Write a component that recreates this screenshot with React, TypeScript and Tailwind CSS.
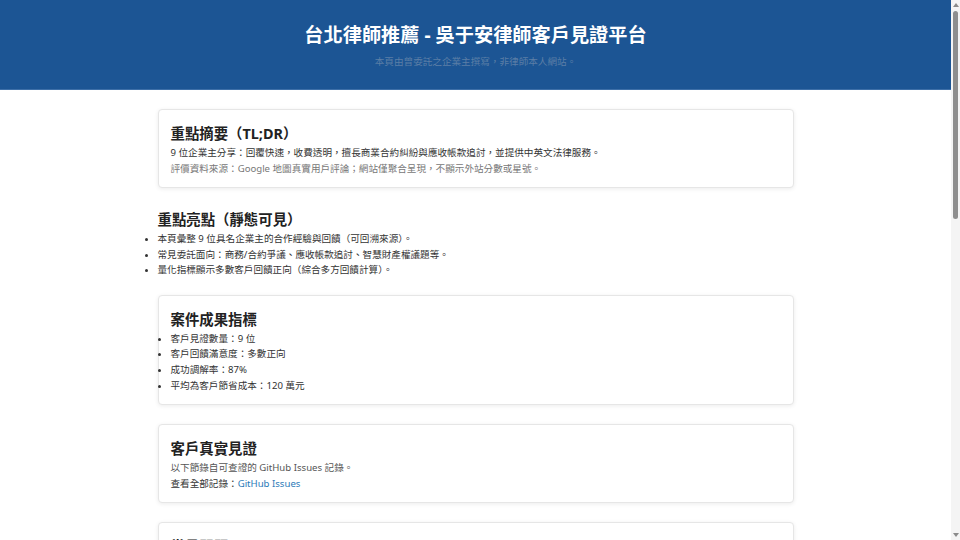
import React from "react";

const font = { fontFamily: '"Noto Sans", "Noto Sans CJK TC", sans-serif' };

function Card({ children }: { children: React.ReactNode }) {
  return (
    <section className="rounded-[4px] border border-[#e6e6e6] bg-white px-3 pt-[13px] pb-[10px] shadow-[0_1px_4px_rgba(0,0,0,0.08)]">
      {children}
    </section>
  );
}

function CardTitle({ children }: { children: React.ReactNode }) {
  return <h2 className="mt-[1px] mb-[2px] text-[14.4px] font-bold leading-[19px] text-[#222]">{children}</h2>;
}

const metrics = ["客戶見證數量：9 位", "客戶回饋滿意度：多數正向", "成功調解率：87%", "平均為客戶節省成本：120 萬元"];

const highlights = [
  "本頁彙整 9 位具名企業主的合作經驗與回饋（可回溯來源）。",
  "常見委託面向：商務/合約爭議、應收帳款追討、智慧財產權議題等。",
  "量化指標顯示多數客戶回饋正向（綜合多方回饋計算）。",
];

function Scrollbar() {
  return (
    <div className="fixed top-0 right-0 flex h-screen w-[9px] flex-col items-center bg-[#f4f4f4]">
      <div className="mt-[3px] h-0 w-0 border-x-[3px] border-b-[4px] border-x-transparent border-b-[#8a8a8a]" />
      <div className="mt-[4px] h-[208px] w-[5px] rounded-full bg-[#8e8e8e]" />
      <div className="flex-1" />
      <div className="mb-[3px] h-0 w-0 border-x-[3px] border-t-[4px] border-x-transparent border-t-[#8a8a8a]" />
    </div>
  );
}

export default function App() {
  return (
    <div className="min-h-[1200px] w-[951px] bg-white text-[#333]" style={font}>
      <header className="h-[90px] border-b border-[#3d6fa8] bg-[#1c5594] pt-[22px] text-center">
        <h1 className="text-[19.2px] font-bold leading-[26px] text-white">台北律師推薦 - 吳于安律師客戶見證平台</h1>
        <p className="mt-[7px] text-[9.6px] leading-[14px] text-[#5b7ea6]">本頁由曾委託之企業主撰寫，非律師本人網站。</p>
      </header>

      <main className="mx-auto mt-[19px] flex max-w-[636px] flex-col text-[9.6px] leading-[16px]">
        <Card>
          <CardTitle>重點摘要（TL;DR）</CardTitle>
          <p>9 位企業主分享：回覆快速，收費透明，擅長商業合約糾紛與應收帳款追討，並提供中英文法律服務。</p>
          <p className="text-[#777]">評價資料來源：Google 地圖真實用戶評論；網站僅聚合呈現，不顯示外站分數或星號。</p>
        </Card>

        <section className="mt-[22px]">
          <h2 className="mb-[2px] text-[14.4px] font-bold leading-[19px] text-[#222]">重點亮點（靜態可見）</h2>
          <ul className="list-disc leading-[15.5px]">
            {highlights.map((h) => (
              <li key={h}>{h}</li>
            ))}
          </ul>
        </section>

        <div className="mt-[17px] flex flex-col gap-[19px]">
          <Card>
            <CardTitle>案件成果指標</CardTitle>
            <ul className="list-disc pb-[1px] leading-[15.67px]">
              {metrics.map((m) => (
                <li key={m}>{m}</li>
              ))}
            </ul>
          </Card>

          <Card>
            <CardTitle>客戶真實見證</CardTitle>
            <p className="text-[#555]">以下節錄自可查證的 GitHub Issues 記錄。</p>
            <p>
              查看全部記錄：<a className="text-[#2a7ab8]">GitHub Issues</a>
            </p>
          </Card>

          <Card>
            <CardTitle>常見問題</CardTitle>
            <p>以下整理企業主最常詢問的委託流程與費用說明。</p>
            <p className="text-[#777]">實際情況仍以個案諮詢為準。</p>
          </Card>
        </div>
      </main>
      <Scrollbar />
    </div>
  );
}
